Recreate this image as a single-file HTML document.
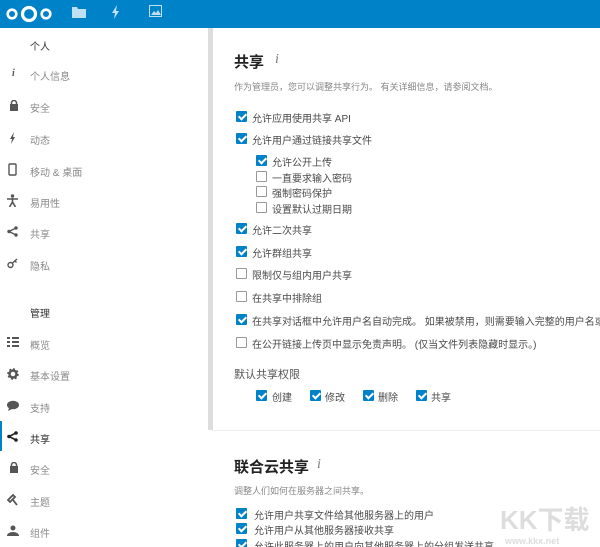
<!DOCTYPE html>
<html><head><meta charset="utf-8"><style>
*{margin:0;padding:0;box-sizing:border-box}
html,body{width:600px;height:547px;overflow:hidden;background:#fff}
body{font-family:"Liberation Sans","Noto Sans CJK SC",sans-serif;color:#555}
#w{position:relative;width:600px;height:547px;overflow:hidden}
.hdr{position:absolute;left:0;top:0;width:600px;height:28px;background:#0082c9}
.a{position:absolute;white-space:nowrap}
.side{font-size:10px;color:#8a8a8a}
.cb{position:absolute;width:11px;height:11px;border:1px solid #999;border-radius:1px;background:#fff}
.cb.on{background:#0082c9;border-color:#0082c9}
.cb.on:after{content:"";position:absolute;left:3px;top:0px;width:3px;height:6px;border:solid #fff;border-width:0 2px 2px 0;transform:rotate(45deg)}
.t{font-size:10px;color:#4a4a4a}
</style></head><body><div id="w">
<div class="hdr"></div>
<svg class="a" style="left:5px;top:3px" width="48" height="22" viewBox="0 0 48 22"><circle cx="7" cy="11" r="4.3" fill="none" stroke="#fff" stroke-width="2.6"/><circle cx="24" cy="11" r="6.5" fill="none" stroke="#fff" stroke-width="3.2"/><circle cx="41" cy="11" r="4.3" fill="none" stroke="#fff" stroke-width="2.6"/></svg>
<svg class="a" style="left:72px;top:6px" width="14" height="12"><path d="M0 1h5l1 2h8v9H0z" fill="#fff" opacity=".75"/></svg>
<svg class="a" style="left:111px;top:5px" width="10" height="14"><path d="M6 0L1 8h3l-1 6 5-8H5z" fill="#fff" opacity=".75"/></svg>
<svg class="a" style="left:149px;top:5px" width="13" height="12"><rect x=".5" y=".5" width="12" height="11" fill="none" stroke="#fff" opacity=".75"/><path d="M2 10l3-4 2 2 2-3 3 5z" fill="#fff" opacity=".75"/></svg>
<div class="a" style="left:208px;top:28px;width:5px;height:402px;background:#ddd"></div>

<div class="a side" style="left:30px;top:38px;color:#333">个人</div>
<div class="a side" style="left:12px;top:68px;font-style:italic;font-family:'Liberation Serif';font-weight:bold;color:#555">i</div><div class="a side" style="left:30px;top:68px">个人信息</div>
<svg class="a" style="left:9px;top:100px" width="10" height="11"><rect x="1" y="4" width="8" height="7" fill="#555"/><path d="M2.5 5V3a2.5 2.5 0 0 1 5 0v2" fill="none" stroke="#555" stroke-width="1.5"/></svg><div class="a side" style="left:30px;top:100px">安全</div>
<svg class="a" style="left:9px;top:132px" width="8" height="12"><path d="M5 0L1 7h2l-1 5 4-7H4z" fill="#555"/></svg><div class="a side" style="left:30px;top:132px">动态</div>
<svg class="a" style="left:8px;top:163px" width="9" height="13"><rect x="1" y="1" width="7" height="11" rx="1" fill="none" stroke="#555" stroke-width="1.4"/></svg><div class="a side" style="left:30px;top:164px">移动 &amp; 桌面</div>
<svg class="a" style="left:7px;top:194px" width="11" height="13"><circle cx="5.5" cy="2" r="1.7" fill="#555"/><path d="M0 5h11M5.5 4v4M5.5 8l-3 5M5.5 8l3 5" stroke="#555" stroke-width="1.6" fill="none"/></svg><div class="a side" style="left:30px;top:195px">易用性</div>
<svg class="a" style="left:7px;top:226px" width="11" height="11"><path d="M9 2L2 5.5 9 9" stroke="#555" stroke-width="1.4" fill="none"/><circle cx="9" cy="2" r="1.7" fill="#555"/><circle cx="2" cy="5.5" r="1.7" fill="#555"/><circle cx="9" cy="9" r="1.7" fill="#555"/></svg><div class="a side" style="left:30px;top:226px">共享</div>
<svg class="a" style="left:7px;top:258px" width="12" height="11"><circle cx="3.5" cy="7" r="2.5" fill="none" stroke="#555" stroke-width="1.4"/><path d="M5.5 5L10 1M8 3l1.5 1.5" stroke="#555" stroke-width="1.4"/></svg><div class="a side" style="left:30px;top:258px">隐私</div>

<div class="a side" style="left:30px;top:305px;color:#333">管理</div>
<svg class="a" style="left:7px;top:337px" width="12" height="11"><path d="M0 1h3M0 5h3M0 9h3M5 1h7M5 5h7M5 9h7" stroke="#555" stroke-width="2"/></svg><div class="a side" style="left:30px;top:337px">概览</div>
<svg class="a" style="left:7px;top:368px" width="12" height="12"><circle cx="6" cy="6" r="3.5" fill="none" stroke="#555" stroke-width="2.4"/><circle cx="6" cy="6" r="5" fill="none" stroke="#555" stroke-width="1.5" stroke-dasharray="2 1.9"/></svg><div class="a side" style="left:30px;top:368px">基本设置</div>
<svg class="a" style="left:7px;top:400px" width="12" height="11"><ellipse cx="6" cy="5" rx="6" ry="4.3" fill="#555"/><path d="M2 8l-1 3 4-2z" fill="#555"/></svg><div class="a side" style="left:30px;top:400px">支持</div>
<div class="a" style="left:0;top:421px;width:2px;height:30px;background:#0082c9"></div>
<svg class="a" style="left:7px;top:431px" width="11" height="11"><path d="M9 2L2 5.5 9 9" stroke="#222" stroke-width="1.6" fill="none"/><circle cx="9" cy="2" r="1.8" fill="#222"/><circle cx="2" cy="5.5" r="1.8" fill="#222"/><circle cx="9" cy="9" r="1.8" fill="#222"/></svg><div class="a side" style="left:30px;top:431px;color:#222">共享</div>
<svg class="a" style="left:9px;top:462px" width="10" height="11"><rect x="1" y="4" width="8" height="7" fill="#555"/><path d="M2.5 5V3a2.5 2.5 0 0 1 5 0v2" fill="none" stroke="#555" stroke-width="1.5"/></svg><div class="a side" style="left:30px;top:462px">安全</div>
<svg class="a" style="left:7px;top:494px" width="12" height="12"><path d="M1 6l5-5 2 2-5 5zM6 6l4 5" stroke="#555" stroke-width="1.8" fill="none"/></svg><div class="a side" style="left:30px;top:494px">主题</div>
<svg class="a" style="left:7px;top:525px" width="12" height="12"><circle cx="6" cy="3" r="2.5" fill="#555"/><path d="M0 11a6 4 0 0 1 12 0z" fill="#555"/></svg><div class="a side" style="left:30px;top:525px">组件</div>

<div class="a" style="left:213px;top:430px;width:387px;height:1px;background:#eee"></div>

<div class="a" style="left:234px;top:51px;font-size:15px;font-weight:bold;color:#222">共享</div>
<div class="a" style="left:275px;top:52px;font-size:14px;font-style:italic;font-family:'Liberation Serif';color:#777">i</div>
<div class="a" style="left:234px;top:80px;font-size:9px;color:#888">作为管理员，您可以调整共享行为。 有关详细信息，请参阅文档。</div>

<div class="cb on" style="left:236px;top:111px"></div><div class="a t" style="left:252px;top:110px">允许应用使用共享 API</div>
<div class="cb on" style="left:236px;top:133px"></div><div class="a t" style="left:252px;top:132px">允许用户通过链接共享文件</div>
<div class="cb on" style="left:256px;top:155px"></div><div class="a t" style="left:272px;top:154px">允许公开上传</div>
<div class="cb" style="left:256px;top:171px"></div><div class="a t" style="left:272px;top:170px">一直要求输入密码</div>
<div class="cb" style="left:256px;top:186px"></div><div class="a t" style="left:272px;top:185px">强制密码保护</div>
<div class="cb" style="left:256px;top:202px"></div><div class="a t" style="left:272px;top:201px">设置默认过期日期</div>
<div class="cb on" style="left:236px;top:223px"></div><div class="a t" style="left:252px;top:222px">允许二次共享</div>
<div class="cb on" style="left:236px;top:246px"></div><div class="a t" style="left:252px;top:245px">允许群组共享</div>
<div class="cb" style="left:236px;top:268px"></div><div class="a t" style="left:252px;top:267px">限制仅与组内用户共享</div>
<div class="cb" style="left:236px;top:291px"></div><div class="a t" style="left:252px;top:290px">在共享中排除组</div>
<div class="cb on" style="left:236px;top:314px"></div><div class="a t" style="left:252px;top:313px;width:348px;overflow:hidden">在共享对话框中允许用户名自动完成。 如果被禁用，则需要输入完整的用户名或电子邮件地址</div>
<div class="cb" style="left:236px;top:337px"></div><div class="a t" style="left:252px;top:336px">在公开链接上传页中显示免责声明。 (仅当文件列表隐藏时显示。)</div>

<div class="a" style="left:234px;top:366px;font-size:11px;color:#555">默认共享权限</div>
<div class="cb on" style="left:256px;top:390px"></div><div class="a t" style="left:272px;top:389px">创建</div>
<div class="cb on" style="left:310px;top:390px"></div><div class="a t" style="left:325px;top:389px">修改</div>
<div class="cb on" style="left:363px;top:390px"></div><div class="a t" style="left:378px;top:389px">删除</div>
<div class="cb on" style="left:416px;top:390px"></div><div class="a t" style="left:431px;top:389px">共享</div>

<div class="a" style="left:234px;top:456px;font-size:15px;font-weight:bold;color:#222">联合云共享</div>
<div class="a" style="left:317px;top:457px;font-size:14px;font-style:italic;font-family:'Liberation Serif';color:#777">i</div>
<div class="a" style="left:234px;top:484px;font-size:9px;color:#888">调整人们如何在服务器之间共享。</div>
<div class="cb on" style="left:236px;top:508px"></div><div class="a t" style="left:254px;top:507px">允许用户共享文件给其他服务器上的用户</div>
<div class="cb on" style="left:236px;top:523px"></div><div class="a t" style="left:254px;top:522px">允许用户从其他服务器接收共享</div>
<div class="cb on" style="left:236px;top:539px"></div><div class="a t" style="left:254px;top:538px">允许此服务器上的用户向其他服务器上的分组发送共享</div>
<div class="a" style="left:500px;top:500px;font-size:26px;font-weight:bold;color:#ddd">KK下载</div>
<div class="a" style="left:505px;top:536px;font-size:9px;color:#ddd;font-weight:bold">www.kkx.net</div>
</div></body></html>
